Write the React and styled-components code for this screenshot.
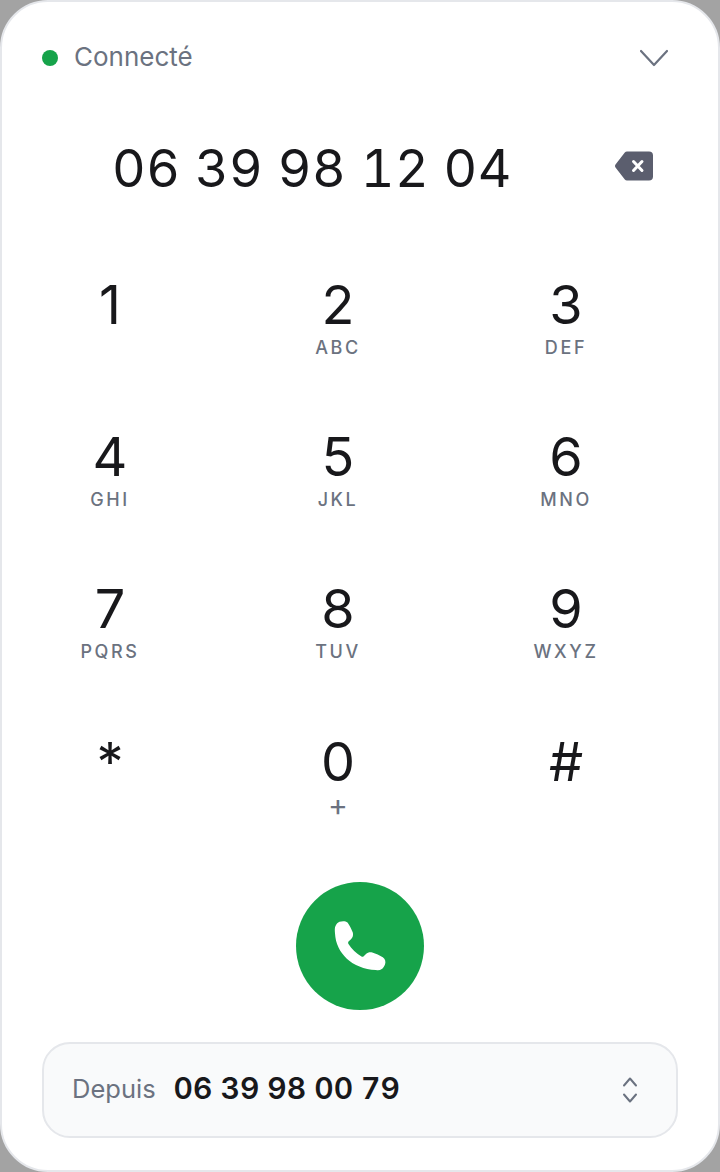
import React from 'react';
import styled, {createGlobalStyle} from 'styled-components';

const GlobalStyle = createGlobalStyle`
  html, body {
    margin: 0;
    padding: 0;
    background: #a3a3a3;
  }
  body {
    font-family: Inter, "Liberation Sans", sans-serif;
  }
`;

const Panel = styled.div`
  box-sizing: border-box;
  width: 720px;
  height: 1172px;
  display: flex;
  flex-direction: column;
  padding: 0 40px;
  background: #fff;
  border: 2px solid #e5e7eb;
  border-radius: 48px;
  overflow: hidden;
`;

const Header = styled.div`
  display: flex;
  align-items: center;
  justify-content: space-between;
  height: 56px;
  margin-top: 28px;
`;

const Status = styled.div`
  display: flex;
  align-items: center;
  gap: 16px;
  font-size: 26px;
  color: #6b7280;
`;

const StatusText = styled.span`
  padding-bottom: 4px;
`;

const Dot = styled.span`
  width: 16px;
  height: 16px;
  border-radius: 50%;
  background: #16a34a;
`;

const Collapse = styled.svg`
  width: 32px;
  height: 32px;
  margin-right: 8px;
  fill: none;
  stroke: #6b7280;
  stroke-width: 2.2;
  stroke-linecap: round;
  stroke-linejoin: round;
`;

const Display = styled.div`
  display: flex;
  align-items: center;
  height: 72px;
  margin-top: 46px;
`;

const PhoneNumber = styled.div`
  margin-left: 70px;
  font-size: 52px;
  letter-spacing: 0.5px;
  font-variant-numeric: tabular-nums;
  color: #18181b;
  white-space: nowrap;
`;

const Backspace = styled.svg`
  width: 40px;
  height: 32px;
  margin-left: auto;
  margin-right: 24px;
  margin-bottom: 4px;
`;

const Keypad = styled.div`
  display: grid;
  grid-template-columns: repeat(3, 68px);
  grid-auto-rows: 152px;
  column-gap: 160px;
  margin-top: 57px;
  margin-left: 34px;
`;

const Key = styled.div`
  display: flex;
  flex-direction: column;
  align-items: center;
  padding-top: 14px;
  color: #18181b;
`;

const Digit = styled.span`
  font-size: 54px;
  line-height: 60px;
  transform: translateY(${({$low}) => ($low ? '1px' : '0')});
`;

const Letters = styled.span`
  margin-top: 1px;
  font-size: 18px;
  line-height: 24px;
  font-weight: 500;
  letter-spacing: 2.6px;
  color: #6b7280;
  white-space: nowrap;
`;

const Plus = styled.span`
  margin-top: 2px;
  font-size: 30px;
  line-height: 24px;
  color: #6b7280;
`;

const CallButton = styled.div`
  align-self: center;
  display: flex;
  align-items: center;
  justify-content: center;
  width: 128px;
  height: 128px;
  margin-top: 13px;
  border-radius: 50%;
  background: #16a34a;
`;

const Source = styled.div`
  box-sizing: border-box;
  display: flex;
  align-items: center;
  height: 96px;
  margin-top: 32px;
  padding: 0 36px 0 28px;
  background: #f9fafb;
  border: 2px solid #e5e7eb;
  border-radius: 28px;
`;

const SourceLabel = styled.span`
  padding-bottom: 4px;
  font-size: 25.5px;
  color: #6b7280;
`;

const SourceNumber = styled.span`
  margin-left: 18px;
  padding-bottom: 4px;
  font-size: 30px;
  font-weight: 600;
  font-variant-numeric: tabular-nums;
  color: #18181b;
`;

const Stepper = styled.svg`
  width: 20px;
  height: 28px;
  margin-left: auto;
  fill: none;
  stroke: #6b7280;
  stroke-width: 2;
  stroke-linecap: round;
  stroke-linejoin: round;
`;

const keys = [
  ['1', ''],
  ['2', 'ABC'],
  ['3', 'DEF'],
  ['4', 'GHI'],
  ['5', 'JKL'],
  ['6', 'MNO'],
  ['7', 'PQRS'],
  ['8', 'TUV'],
  ['9', 'WXYZ'],
  ['*', ''],
  ['0', '+'],
  ['#', '']
];

const App = () => (
  <>
    <GlobalStyle/>
    <Panel>
      <Header>
        <Status>
          <Dot/>
          <StatusText>Connecté</StatusText>
        </Status>
        <Collapse viewBox="0 0 32 32">
          <path d="M3 9l13 14L29 9"/>
        </Collapse>
      </Header>

      <Display>
        <PhoneNumber>06 39 98 12 04</PhoneNumber>
        <Backspace viewBox="0 0 40 32">
          <path d="M13 1.500h22a4 4 0 0 1 4 4v21a4 4 0 0 1-4 4H13a3 3 0 0 1-2.200-1L1.500 17.500a2.400 2.400 0 0 1 0-3L10.800 2.500a3 3 0 0 1 2.200-1z" fill="#5b5e6e"/>
          <path d="M19.500 11.500l8.500 9M28 11.500l-8.500 9" stroke="#fff" strokeWidth="3" strokeLinecap="round"/>
        </Backspace>
      </Display>

      <Keypad>
        {keys.map(([digit, letters], i) => (
          <Key key={digit}>
            <Digit $low={i > 8}>{digit}</Digit>
            {letters === '+' && <Plus>+</Plus>}
            {!!letters && letters !== '+' && <Letters>{letters}</Letters>}
          </Key>
        ))}
      </Keypad>

      <CallButton>
        <svg width="56" height="56" viewBox="0 0 56 56">
          <path d="M7.500 3.800C10 3 13.500 2.800 15.500 4.500C17.500 7.500 19.500 11 20.800 14.500C21.500 17 20.800 19.500 19 21.200L16.500 23.500C16 24.200 16 25 16.300 25.700C19.500 31 24.500 35.500 29.500 38.500C30.300 38.900 31 38.800 31.700 38.200L34 36C35.700 34.400 38 33.800 40.300 34.500C44 35.700 47.500 37.300 50.800 39.200C53.300 40.800 54 44 53 46.500C52.300 48.300 51.300 50 49.800 51C48 52.300 46 52.500 44 52C20 51 4 35 3 15.500C2.700 12 2.700 9.500 3.500 8C4.500 6 5.700 4.500 7.500 3.800z" fill="#fff"/>
        </svg>
      </CallButton>

      <Source>
        <SourceLabel>Depuis</SourceLabel>
        <SourceNumber>06 39 98 00 79</SourceNumber>
        <Stepper viewBox="0 0 20 28">
          <path d="M4 9.500l6-7 6 7M4 18.500l6 7 6-7"/>
        </Stepper>
      </Source>
    </Panel>
  </>
);

export default App;
